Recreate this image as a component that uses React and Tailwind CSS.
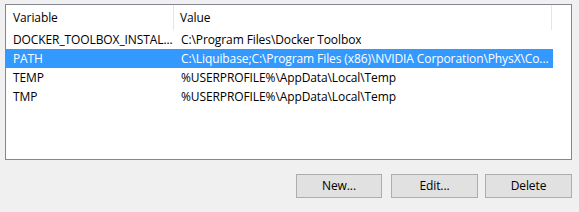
export default function App() {
  const rows = [
    ["DOCKER_TOOLBOX_INSTAL...", "C:\\Program Files\\Docker Toolbox", false],
    ["PATH", "C:\\Liquibase;C:\\Program Files (x86)\\NVIDIA Corporation\\PhysX\\Co...", true],
    ["TEMP", "%USERPROFILE%\\AppData\\Local\\Temp", false],
    ["TMP", "%USERPROFILE%\\AppData\\Local\\Temp", false],
  ];
  return (
    <div
      className="w-[579px] h-[212px] bg-[#f0f0f0] pt-[4px] pl-[5px] text-[12px] tracking-[-0.1px] text-black"
      style={{ fontFamily: '"Open Sans", "Noto Sans", sans-serif' }}
    >
      <div className="w-[567px] h-[156px] border border-[#828790] bg-white">
        <div className="flex h-[25px] items-center">
          <div className="w-[168px] h-full flex items-center pl-[7px] border-r border-[#e5e5e5]">Variable</div>
          <div className="w-[378px] h-full flex items-center pl-[6px] border-r border-[#e5e5e5]">Value</div>
        </div>
        {rows.map(([n, v, sel]) => (
          <div key={n} className={`flex h-[19px] items-center w-[547px] ${sel ? "bg-[#3399ff] text-white" : ""}`}>
            <div className="w-[169px] pl-[7px] whitespace-nowrap overflow-hidden">{n}</div>
            <div className="pl-[6px] whitespace-nowrap overflow-hidden">{v}</div>
          </div>
        ))}
      </div>
      <div className="flex mt-[14px] pl-[291px]">
        <button className="w-[86px] h-[24px] bg-[#e1e1e1] border border-[#adadad]">New...</button>
        <button className="w-[87px] h-[24px] ml-[9px] bg-[#e1e1e1] border border-[#adadad]">Edit...</button>
        <button className="w-[87px] h-[24px] ml-[7px] bg-[#e1e1e1] border border-[#adadad]">Delete</button>
      </div>
    </div>
  );
}
